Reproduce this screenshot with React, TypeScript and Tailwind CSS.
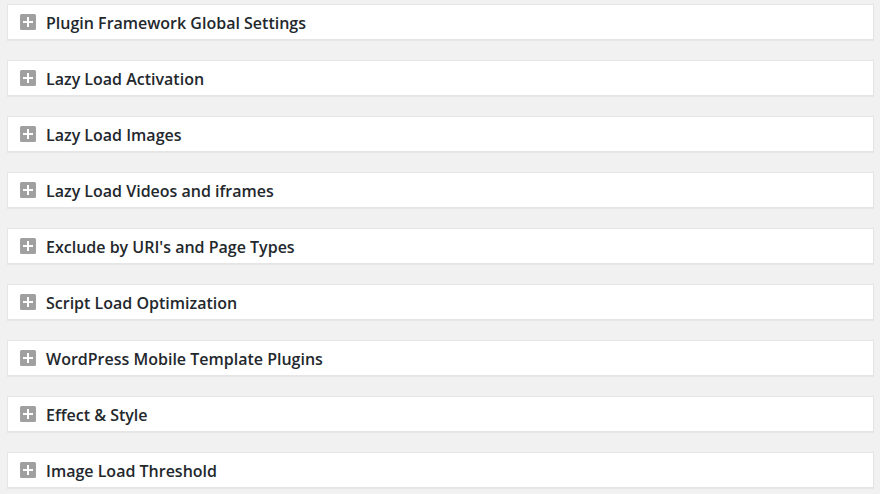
const sections: string[] = [
  "Plugin Framework Global Settings",
  "Lazy Load Activation",
  "Lazy Load Images",
  "Lazy Load Videos and iframes",
  "Exclude by URI's and Page Types",
  "Script Load Optimization",
  "WordPress Mobile Template Plugins",
  "Effect & Style",
  "Image Load Threshold",
];

const PlusIcon = () => (
  <svg width="16" height="16" viewBox="0 0 16 16" className="shrink-0">
    <rect x="0" y="0" width="16" height="16" rx="1.5" fill="#a0a0a0" />
    <rect x="3" y="7" width="10" height="2" fill="#fff" />
    <rect x="7" y="3" width="2" height="10" fill="#fff" />
  </svg>
);

const Section = ({ title }: { title: string }) => (
  <li className="flex h-[36px] items-center gap-[10px] border border-[#e5e5e5] bg-white pl-[12px] shadow-[0_1px_1px_rgba(0,0,0,0.04)]">
    <PlusIcon />
    <h3 className="pt-[1px] text-[16px] font-semibold leading-none text-[#23282d]">
      {title}
    </h3>
  </li>
);

const App = () => {
  return (
    <main
      className="min-h-screen bg-[#f1f1f1] pl-[7px] pr-[6px] pt-[4px]"
      style={{ fontFamily: '"Open Sans", "Noto Sans", sans-serif' }}
    >
      <ul className="flex flex-col gap-[20px]">
        {sections.map((s, i) => (
          <Section key={i} title={s} />
        ))}
      </ul>
    </main>
  );
};

export default App;
